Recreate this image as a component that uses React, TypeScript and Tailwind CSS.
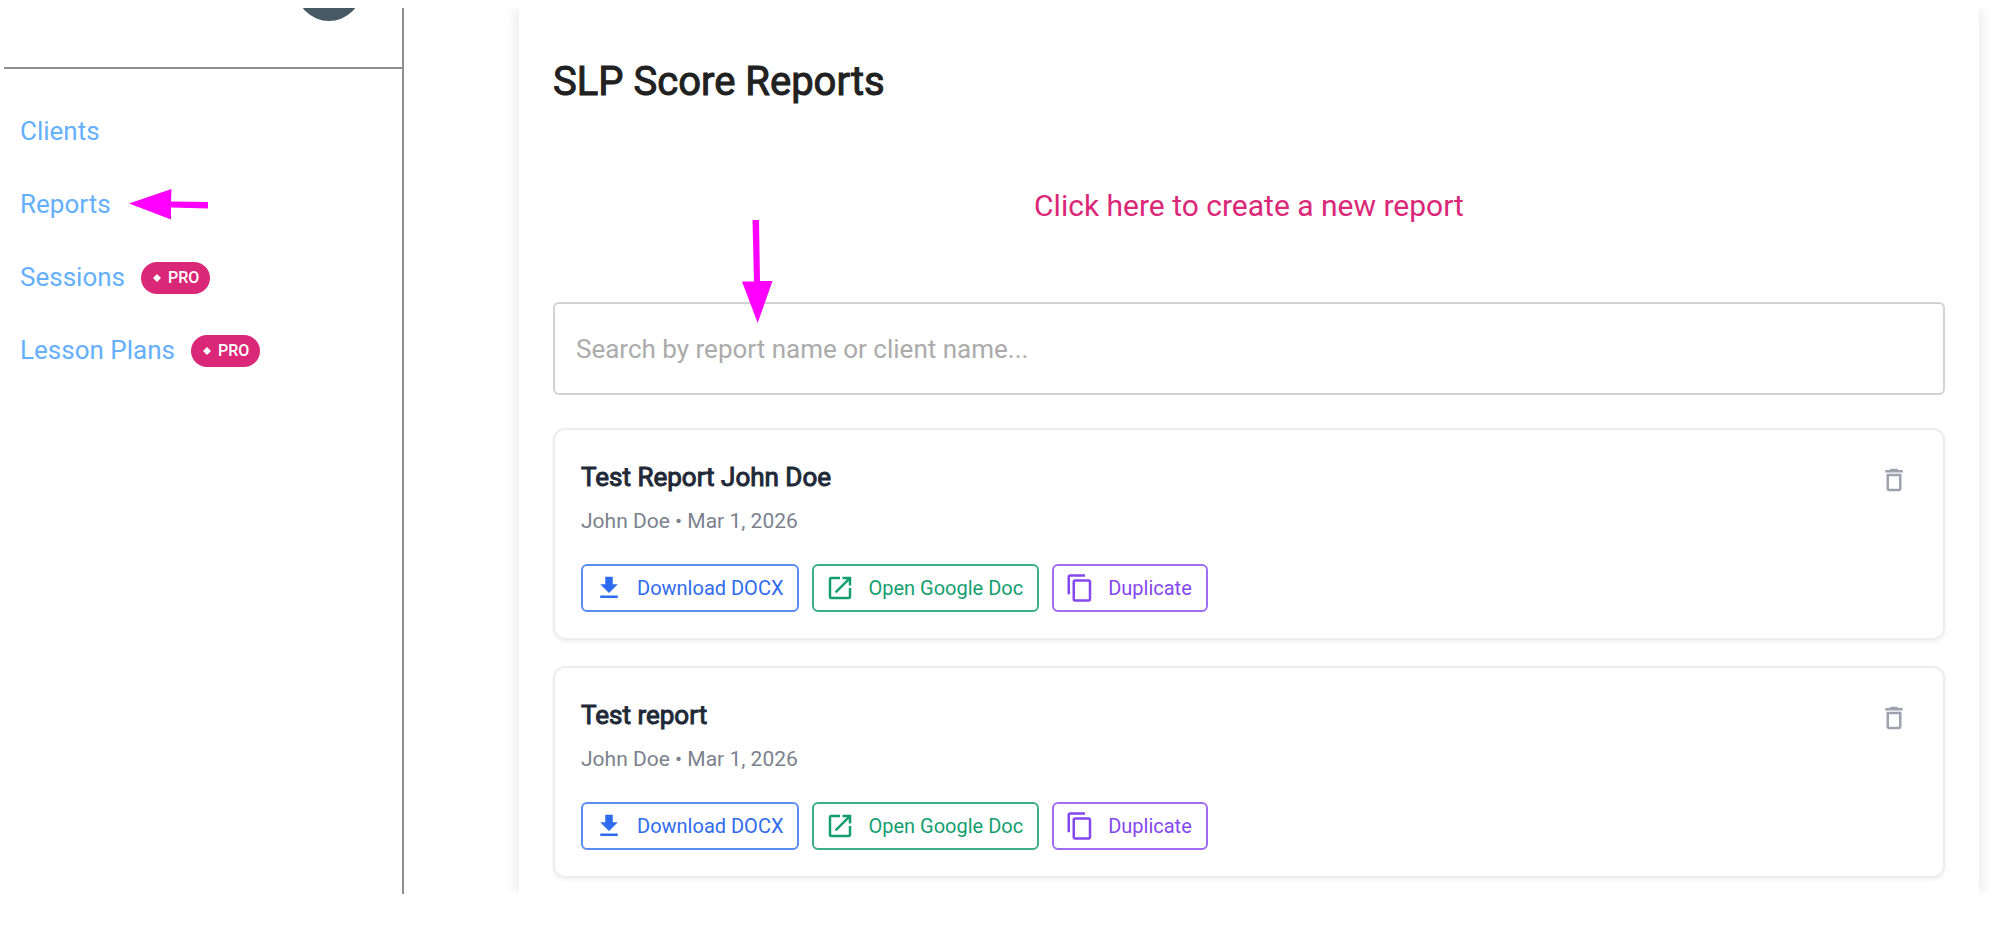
import { useState } from "react";
import type { ReactNode } from "react";
import { MdContentCopy, MdDeleteOutline, MdDownload, MdOpenInNew } from "react-icons/md";

type NavItem = { label: string; pro?: boolean; marked?: boolean };
type Report = { id: number; name: string; client: string; date: string };

const NAV_ITEMS: NavItem[] = [
  { label: "Clients" },
  { label: "Reports", marked: true },
  { label: "Sessions", pro: true },
  { label: "Lesson Plans", pro: true },
];

const REPORTS: Report[] = [
  { id: 1, name: "Test Report John Doe", client: "John Doe", date: "Mar 1, 2026" },
  { id: 2, name: "Test report", client: "John Doe", date: "Mar 1, 2026" },
];

function ProBadge() {
  return (
    <span className="flex h-8 items-center gap-[7px] rounded-full bg-[#db2777] pr-[11px] pl-3 text-base font-medium text-white">
      <svg viewBox="0 0 8 8" className="size-2 fill-current" aria-hidden="true">
        <path d="M4 0 8 4 4 8 0 4z" />
      </svg>
      PRO
    </span>
  );
}

function Sidebar() {
  return (
    <aside className="w-[400px] shrink-0 border-r-2 border-[#8f8f8f]">
      <div className="relative h-[61px] overflow-hidden border-b-2 border-[#8f8f8f]">
        <div className="absolute right-10 bottom-[46px] size-[66px] rounded-full bg-[#455a64]" />
      </div>
      <nav className="flex flex-col pt-[26px] pl-4">
        {NAV_ITEMS.map((item) => (
          <div key={item.label} className="flex h-[73px] items-center gap-4">
            <a href="#" className="text-[26px] text-[#64b0ff]">
              {item.label}
            </a>
            {item.pro && <ProBadge />}
            {item.marked && (
              <svg viewBox="0 0 82 32" className="h-8 w-[82px] fill-[#ff00ff]" aria-hidden="true">
                <path d="M2 14.500 44.500 0 44 12.500 81 13V19.500L44 18.500V30.500z" />
              </svg>
            )}
          </div>
        ))}
      </nav>
    </aside>
  );
}

function ActionButton({ icon, label, className }: { icon: ReactNode; label: string; className: string }) {
  return (
    <button className={`flex h-12 items-center gap-[13px] rounded-md border-2 pr-[14px] pl-[11px] text-xl ${className}`}>
      {icon}
      {label}
    </button>
  );
}

function ReportCard({ report }: { report: Report }) {
  return (
    <article className="rounded-xl border-2 border-[#ededf1] p-[26px] pt-[27px] shadow-[0_2px_4px_rgba(0,0,0,0.06)]">
      <div className="flex items-start justify-between">
        <div>
          <h2 className="text-[26px] leading-[40px] font-normal text-[#1f2937] [-webkit-text-stroke:1px]">
            {report.name}
          </h2>
          <p className="mt-2 text-[21px] leading-[32px] text-[#7b818d]">
            {report.client} • {report.date}
          </p>
        </div>
        <button aria-label={`Delete ${report.name}`} className="mt-2 mr-2 text-[#9ca3af]">
          <MdDeleteOutline className="size-[30px]" />
        </button>
      </div>
      <div className="mt-[27px] flex gap-[13px]">
        <ActionButton
          icon={<MdDownload className="size-[30px]" />}
          label="Download DOCX"
          className="border-[#5c8df5] text-[#2f6bee]"
        />
        <ActionButton
          icon={<MdOpenInNew className="size-[30px]" />}
          label="Open Google Doc"
          className="border-[#3dae85] text-[#149e70]"
        />
        <ActionButton
          icon={<MdContentCopy className="size-[30px]" />}
          label="Duplicate"
          className="border-[#a06cf5] text-[#8547ef]"
        />
      </div>
    </article>
  );
}

export default function App() {
  const [query, setQuery] = useState("");

  const visible = REPORTS.filter((r) => `${r.name} ${r.client}`.toLowerCase().includes(query.toLowerCase()));

  return (
    <div className="h-screen overflow-hidden bg-white pt-2 pb-[45px] pl-1 font-[Roboto,sans-serif]">
      <div className="flex h-full overflow-hidden">
        <Sidebar />
        <main className="mr-5 ml-[115px] flex-1 px-[34px] pt-[50px] shadow-[0_0_16px_rgba(0,0,0,0.12)]">
          <h1 className="text-[40px] leading-[48px] font-normal text-[#212121] [-webkit-text-stroke:1px]">
            SLP Score Reports
          </h1>
          <div className="mt-[76px] flex justify-center">
            <a href="#" className="text-[30px] leading-[48px] text-[#db2777]">
              Click here to create a new report
            </a>
          </div>
          <div className="relative mt-[72px]">
            <input
              type="text"
              aria-label="Search reports"
              value={query}
              onChange={(e) => setQuery(e.target.value)}
              placeholder="Search by report name or client name..."
              className="block h-[93px] w-full rounded-md border-2 border-[#d2d2d2] px-[21px] text-[26px] placeholder:text-[#ababab]"
            />
            <svg
              viewBox="0 0 31 103"
              className="pointer-events-none absolute -top-[82px] left-[189px] h-[103px] w-[31px] fill-[#ff00ff]"
              aria-hidden="true"
            >
              <path d="M10.500 0H17L18 61H30.500L15.700 103 0 61.500H12z" />
            </svg>
          </div>
          <div className="mt-[33px] flex flex-col gap-[26px]">
            {visible.map((report) => (
              <ReportCard key={report.id} report={report} />
            ))}
          </div>
        </main>
      </div>
    </div>
  );
}
